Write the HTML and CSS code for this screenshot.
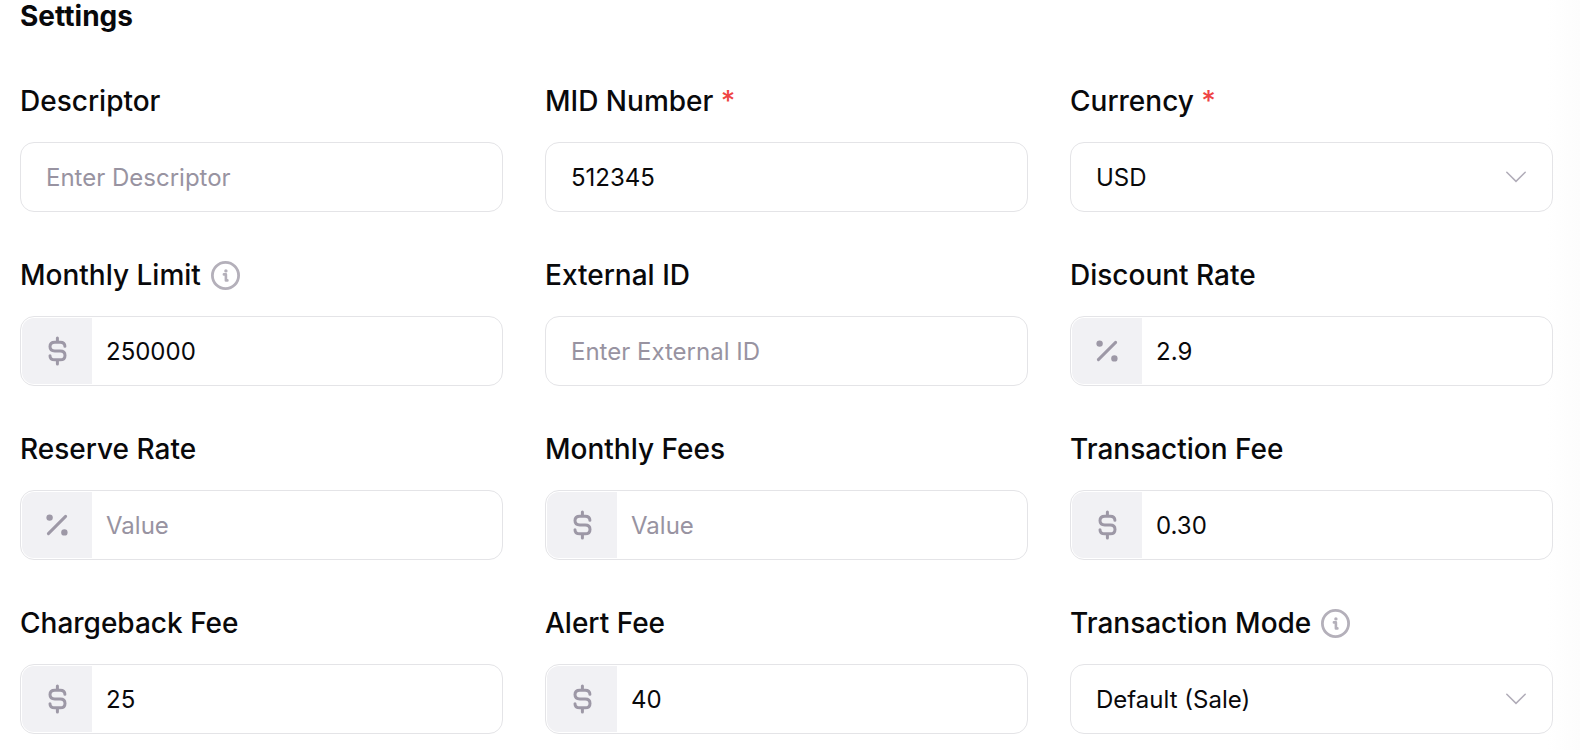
FILE: index.html
```html
<!DOCTYPE html>
<html lang="en">
<head>
<meta charset="utf-8">
<meta name="viewport" content="width=device-width, initial-scale=1">
<title>Settings</title>
<link rel="stylesheet" href="styles.css">
</head>
<body>
<svg class="sprite" aria-hidden="true">
  <symbol id="dollar" viewBox="0 0 30 30"><path d="M15.4 2v4M15.4 24v4M22.9 10.3C22.9 7.7 20.9 6.2 18.2 6.2H12.8C9.8 6.2 8 8 8 10.6S9.8 15 12.8 15h5.4c3 0 4.8 1.8 4.8 4.4s-1.8 4.4-4.8 4.4h-5.4c-2.8 0-4.8-1.5-4.8-4.1"/></symbol>
  <symbol id="percent" viewBox="0 0 30 30"><path d="M6.4 23.6 23.6 6.4"/><circle class="dot" cx="7.6" cy="7.6" r="3.2"/><circle class="dot" cx="22.4" cy="22.4" r="3.2"/></symbol>
  <symbol id="info" viewBox="0 0 29 29"><circle cx="14.5" cy="14.5" r="13.1"/><path class="stem" d="M12.9 13.4h2v6h1.5"/><circle class="dot" cx="14.9" cy="9.9" r="1.7"/></symbol>
  <symbol id="chevron" viewBox="0 0 20 12"><path d="m.8 1.2 9.2 9.2 9.2-9.2"/></symbol>
</svg>
<form class="settings">
  <h2 class="title">Settings</h2>
  <div class="grid">
    <div class="field">
      <div class="caption"><label for="descriptor">Descriptor</label></div>
      <div class="box"><input class="control" id="descriptor" type="text" placeholder="Enter Descriptor"></div>
    </div>
    <div class="field">
      <div class="caption"><label for="mid">MID Number <span class="required">*</span></label></div>
      <div class="box"><input class="control" id="mid" type="text" value="512345" required></div>
    </div>
    <div class="field">
      <div class="caption"><label for="currency">Currency <span class="required">*</span></label></div>
      <div class="box select"><select class="control" id="currency" required><option>USD</option></select><svg class="chevron" aria-hidden="true"><use href="#chevron"/></svg></div>
    </div>
    <div class="field">
      <div class="caption"><label for="limit">Monthly Limit</label><svg class="info" aria-hidden="true"><use href="#info"/></svg></div>
      <div class="box"><span class="unit"><svg class="icon" aria-hidden="true"><use href="#dollar"/></svg></span><input class="control with-unit" id="limit" type="text" value="250000"></div>
    </div>
    <div class="field">
      <div class="caption"><label for="external">External ID</label></div>
      <div class="box"><input class="control" id="external" type="text" placeholder="Enter External ID"></div>
    </div>
    <div class="field">
      <div class="caption"><label for="discount">Discount Rate</label></div>
      <div class="box"><span class="unit"><svg class="icon" aria-hidden="true"><use href="#percent"/></svg></span><input class="control with-unit" id="discount" type="text" value="2.9"></div>
    </div>
    <div class="field">
      <div class="caption"><label for="reserve">Reserve Rate</label></div>
      <div class="box"><span class="unit"><svg class="icon" aria-hidden="true"><use href="#percent"/></svg></span><input class="control with-unit" id="reserve" type="text" placeholder="Value"></div>
    </div>
    <div class="field">
      <div class="caption"><label for="monthly">Monthly Fees</label></div>
      <div class="box"><span class="unit"><svg class="icon" aria-hidden="true"><use href="#dollar"/></svg></span><input class="control with-unit" id="monthly" type="text" placeholder="Value"></div>
    </div>
    <div class="field">
      <div class="caption"><label for="transaction">Transaction Fee</label></div>
      <div class="box"><span class="unit"><svg class="icon" aria-hidden="true"><use href="#dollar"/></svg></span><input class="control with-unit" id="transaction" type="text" value="0.30"></div>
    </div>
    <div class="field">
      <div class="caption"><label for="chargeback">Chargeback Fee</label></div>
      <div class="box"><span class="unit"><svg class="icon" aria-hidden="true"><use href="#dollar"/></svg></span><input class="control with-unit" id="chargeback" type="text" value="25"></div>
    </div>
    <div class="field">
      <div class="caption"><label for="alert">Alert Fee</label></div>
      <div class="box"><span class="unit"><svg class="icon" aria-hidden="true"><use href="#dollar"/></svg></span><input class="control with-unit" id="alert" type="text" value="40"></div>
    </div>
    <div class="field">
      <div class="caption"><label for="mode">Transaction Mode</label><svg class="info" aria-hidden="true"><use href="#info"/></svg></div>
      <div class="box select"><select class="control" id="mode"><option>Default (Sale)</option></select><svg class="chevron" aria-hidden="true"><use href="#chevron"/></svg></div>
    </div>
  </div>
</form>
</body>
</html>
```

FILE: styles.css
```css
*, *::before, *::after {
  box-sizing: border-box;
}

body {
  margin: 0;
  background: linear-gradient(to left, #fcfcfc, #fff 32px);
  color: #09090b;
  font-family: Inter, "Liberation Sans", sans-serif;
}

.sprite {
  display: none;
}

.settings {
  display: flex;
  flex-direction: column;
  gap: 48px;
  padding: 0 27px 16px 20px;
}

.title {
  margin: 0;
  font-size: 28px;
  font-weight: 700;
  line-height: 32px;
}

.grid {
  display: grid;
  grid-template-columns: repeat(3, minmax(0, 1fr));
  gap: 42px;
}

.field {
  display: flex;
  flex-direction: column;
  gap: 20px;
}

.caption {
  display: flex;
  align-items: center;
  gap: 10px;
  font-size: 28px;
  font-weight: 500;
  line-height: 42px;
}

.required {
  color: #ef4444;
}

.info {
  width: 29px;
  height: 29px;
  fill: none;
  stroke: #b4b0ba;
  stroke-width: 2.8;
}

.stem {
  stroke-width: 2.6;
  stroke-linecap: round;
  stroke-linejoin: round;
}

.dot {
  stroke: none;
}

#info .dot {
  fill: #b4b0ba;
}

#percent .dot {
  fill: #9d98a6;
}

.box {
  display: flex;
  height: 70px;
  padding: 1px;
  border: 1px solid #e4e4e7;
  border-radius: 14px;
  background: #fff;
}

.unit {
  display: flex;
  flex: none;
  align-items: center;
  justify-content: center;
  width: 70px;
  border-radius: 12px 0 0 12px;
  background: #f1f1f4;
}

.icon {
  width: 30px;
  height: 30px;
  fill: none;
  stroke: #9d98a6;
  stroke-width: 3;
  stroke-linecap: round;
}

.control {
  flex: 1;
  min-width: 0;
  width: 100%;
  margin: 0;
  padding: 0 24px;
  border: 0;
  border-radius: 12px;
  outline: 0;
  background: transparent;
  color: inherit;
  font: inherit;
  font-size: 24px;
  appearance: none;
}

.with-unit {
  padding: 0 14px;
}

.control::placeholder {
  color: #9893a1;
  opacity: 1;
}

.select {
  display: grid;
  align-items: center;
}

.select > * {
  grid-area: 1 / 1;
}

.select .control {
  height: 100%;
}

.chevron {
  justify-self: end;
  width: 20px;
  height: 12px;
  margin-right: 25px;
  fill: none;
  stroke: #b0acb8;
  stroke-width: 1.5;
  stroke-linecap: round;
  pointer-events: none;
}
```
